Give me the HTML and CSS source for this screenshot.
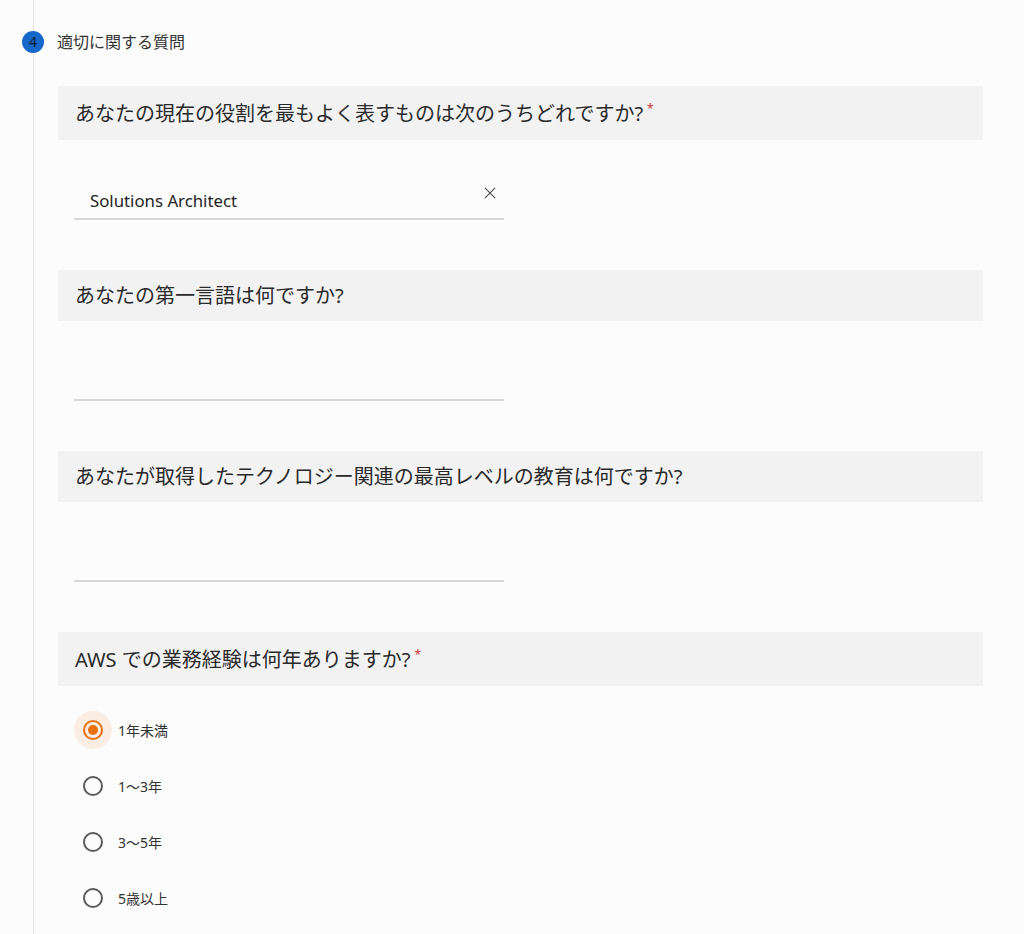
FILE: index.html
```html
<!DOCTYPE html>
<html lang="ja">
<head>
<meta charset="utf-8">
<link rel="stylesheet" href="styles.css">
</head>
<body>
<div class="timeline">
  <div class="step-head">
    <span class="step-num">4</span>
    <span class="step-title">適切に関する質問</span>
  </div>
  <div class="questions">
    <div class="question required">あなたの現在の役割を最もよく表すものは次のうちどれですか?<span class="req">*</span></div>
    <div class="field">
      <span class="value">Solutions Architect</span>
      <svg class="clear" width="14" height="14" viewBox="0 0 14 14"><path d="M1 1L13 13M13 1L1 13" stroke="#444" stroke-width="1.2" fill="none"/></svg>
    </div>

    <div class="question">あなたの第一言語は何ですか?</div>
    <div class="field"></div>

    <div class="question">あなたが取得したテクノロジー関連の最高レベルの教育は何ですか?</div>
    <div class="field"></div>

    <div class="question required">AWS での業務経験は何年ありますか?<span class="req">*</span></div>
    <div class="radios">
      <div class="radio-row">
        <span class="halo checked"><span class="dot"></span></span>
        <span class="label">1年未満</span>
      </div>
      <div class="radio-row">
        <span class="halo"><span class="dot"></span></span>
        <span class="label">1～3年</span>
      </div>
      <div class="radio-row">
        <span class="halo"><span class="dot"></span></span>
        <span class="label">3～5年</span>
      </div>
      <div class="radio-row">
        <span class="halo"><span class="dot"></span></span>
        <span class="label">5歳以上</span>
      </div>
    </div>
  </div>
</div>
</body>
</html>
```
FILE: styles.css
```css
html, body {
  margin: 0;
  padding: 0;
  background: #fcfcfc;
}
body {
  font-family: "Noto Sans", "Noto Sans CJK JP", sans-serif;
  color: #242424;
}
.timeline {
  margin-left: 33px;
  border-left: 1px solid #e4e4e4;
  padding-top: 31px;
  min-height: 934px;
  box-sizing: border-box;
}
.step-head {
  display: flex;
  align-items: center;
  margin-left: -12px;
  gap: 13px;
  height: 22px;
}
.step-num {
  width: 22px;
  height: 22px;
  border-radius: 50%;
  background: #1567c9;
  color: #0f1d30;
  font-size: 14px;
  line-height: 22px;
  text-align: center;
}
.step-title {
  font-size: 16px;
  color: #333;
  line-height: 22px;
}
.questions {
  padding: 33px 41px 0 24px;
}
.question {
  background: #f2f2f2;
  padding: 12px 17px;
  font-size: 20px;
  line-height: 27px;
  color: #2a2a2a;
}
.question.required {
  padding-top: 14px;
  padding-bottom: 13px;
}
.req {
  color: #d13438;
  font-size: 12px;
  vertical-align: top;
  line-height: 12px;
  margin-left: 4px;
  position: relative;
  top: 3px;
}
.field {
  margin: 40px 0 50px 16px;
  height: 38px;
  border-bottom: 2px solid #d6d6d6;
  display: flex;
  align-items: center;
  padding: 0 8px 0 16px;
  box-sizing: content-box;
  width: 406px;
}
.value {
  flex: 1;
  font-size: 16.8px;
  color: #242424;
  padding-top: 3px;
}
.clear {
  width: 12px;
  height: 12px;
  margin-top: -12px;
}
.radios {
  padding-top: 16px;
}
.radio-row {
  height: 56px;
  display: flex;
  align-items: center;
  padding-left: 16px;
}
.halo {
  width: 38px;
  height: 38px;
  border-radius: 50%;
  display: flex;
  align-items: center;
  justify-content: center;
}
.halo .dot {
  width: 16px;
  height: 16px;
  border-radius: 50%;
  border: 2px solid #5a5a5a;
  display: flex;
  align-items: center;
  justify-content: center;
}
.halo.checked {
  background: #f9ede4;
}
.halo.checked .dot {
  border-color: #e8700f;
}
.halo.checked .dot::after {
  content: "";
  width: 10px;
  height: 10px;
  border-radius: 50%;
  background: #e8700f;
}
.label {
  margin-left: 6px;
  font-size: 14px;
  color: #333;
}
```
